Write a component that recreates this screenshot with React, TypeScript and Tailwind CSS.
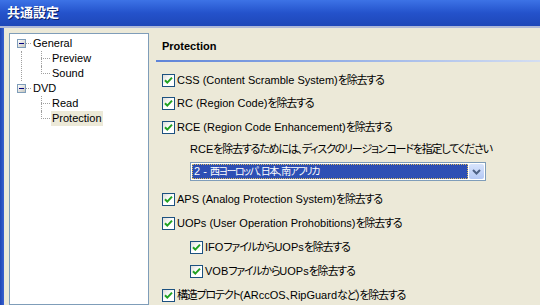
import React from "react";

const FONT = "font-['Liberation_Sans','Noto_Sans_CJK_JP',sans-serif] [font-feature-settings:'palt']";

// Japanese runs are set tighter so they keep the narrow look of the old UI font
const Jp = ({ text, tight = false }: { text: string; tight?: boolean }) => {
  const parts = text.split(/([^\x00-\x7f]+)/);
  return (
    <>
      {parts.map((p, i) =>
        /[^\x00-\x7f]/.test(p) ? (
          <span key={i} className={tight ? "text-[10px] tracking-[-1.5px]" : "tracking-[-1.2px]"}>
            {p}
          </span>
        ) : (
          <span key={i} className="whitespace-pre">
            {p}
          </span>
        )
      )}
    </>
  );
};

const CheckBox = () => (
  <span className="flex h-[13px] w-[13px] shrink-0 items-center justify-center border border-[#1c5180] bg-gradient-to-br from-[#dcdcd7] via-white to-white">
    <svg width="9" height="9" viewBox="0 0 9 9">
      <path d="M1 4.2 L3.3 6.6 L8 1.6" fill="none" stroke="#21a121" strokeWidth="2" />
    </svg>
  </span>
);

const Option = ({ label, indent = false }: { label: string; indent?: boolean }) => (
  <div className={`flex h-[13px] items-center gap-[2px] ${indent ? "pl-[28px]" : ""}`}>
    <CheckBox />
    <span className="whitespace-nowrap text-[11px] leading-none text-black">
      <Jp text={label} />
    </span>
  </div>
);

const Expander = () => (
  <span className="relative z-10 flex h-[9px] w-[9px] items-center justify-center border border-[#7f9db9] bg-gradient-to-br from-white to-[#c6c6be]">
    <span className="h-px w-[5px] bg-[#00007f]" />
  </span>
);

// dotted elbow connecting a child to its parent branch
const Elbow = ({ last }: { last?: boolean }) => (
  <span className="relative ml-[31px] h-[15px] w-[9px] shrink-0">
    <span
      className={`absolute left-0 top-0 w-0 border-l border-dotted border-[#a0a0a0] ${last ? "h-[8px]" : "h-[15px]"}`}
    />
    <span className="absolute left-0 top-[7px] h-0 w-[9px] border-t border-dotted border-[#a0a0a0]" />
  </span>
);

const TreeRoot = ({ label }: { label: string }) => (
  <div className="flex h-[15px] items-center pl-[7px]">
    <Expander />
    <span className="h-0 w-[5px] border-t border-dotted border-[#a0a0a0]" />
    <span className="pl-[2px] text-[11px] leading-none text-black">{label}</span>
  </div>
);

const TreeChild = ({ label, last, selected }: { label: string; last?: boolean; selected?: boolean }) => (
  <div className="flex h-[15px] items-center">
    <Elbow last={last} />
    <span
      className={`ml-[1px] px-[1px] py-[2px] text-[11px] leading-none text-black ${selected ? "bg-[#ece9d8]" : ""}`}
    >
      {label}
    </span>
  </div>
);

export default function App() {
  return (
    <div className={`flex h-[305px] w-[540px] flex-col overflow-hidden bg-[#ece9d8] ${FONT}`}>
      <div className="flex h-[26px] shrink-0 items-center bg-gradient-to-b from-[#3d73e6] via-[#2452cb] to-[#1e47b8] pl-[7px]">
        <span className="text-[13px] font-bold text-white [text-shadow:1px_1px_0_#0a1e6a]">共通設定</span>
      </div>
      <div className="h-[2px] shrink-0 bg-[#aeb8d8]" />
      <div className="flex min-h-0 flex-1">
        <div className="w-[4px] shrink-0 bg-gradient-to-r from-[#1d45b5] to-[#3a62d0]" />
        <div className="flex min-h-0 flex-1 pl-[5px] pt-[5px]">
          <div className="flex w-[140px] shrink-0 flex-col border border-[#7f9db9] bg-white pt-[2px]">
            <TreeRoot label="General" />
            <div className="relative">
              <span className="absolute left-[11px] top-0 h-[30px] border-l border-dotted border-[#a0a0a0]" />
              <TreeChild label="Preview" />
              <TreeChild label="Sound" last />
            </div>
            <TreeRoot label="DVD" />
            <TreeChild label="Read" />
            <TreeChild label="Protection" last selected />
          </div>
          <div className="flex min-w-0 flex-1 flex-col pl-[7px] pt-[8px]">
            <div className="pl-[6px] text-[11px] font-bold leading-none text-black">Protection</div>
            <div className="mt-[8px] h-[2px] bg-gradient-to-r from-[#5f84d8] to-[#d4def2]" />
            <div className="flex flex-col pl-[6px] pt-[12px]">
              <Option label="CSS (Content Scramble System)を除去する" />
              <div className="mt-[10px]">
                <Option label="RC (Region Code)を除去する" />
              </div>
              <div className="mt-[11px]">
                <Option label="RCE (Region Code Enhancement)を除去する" />
              </div>
              <div className="mt-[10px] whitespace-nowrap pl-[28px] text-[11px] leading-none text-black">
                <Jp text="RCEを除去するためには、ディスクのリージョンコードを指定してください" />
              </div>
              <div className="ml-[28px] mt-[7px] flex h-[19px] w-[296px] items-center border border-[#7f9db9] bg-white p-[1px]">
                <div className="flex h-full flex-1 items-center whitespace-nowrap border border-dotted border-[#e0c060] bg-[#2d4fb4] pl-[1px] text-[11px] leading-none text-white">
                  <Jp text="2 - 西ヨーロッパ、日本、南アフリカ" tight />
                </div>
                <div className="ml-[1px] flex h-full w-[15px] items-center justify-center rounded-[2px] bg-gradient-to-b from-[#d8e4fc] to-[#b4c8f4]">
                  <svg width="9" height="6" viewBox="0 0 9 6">
                    <path d="M1 1 L4.5 4.5 L8 1" fill="none" stroke="#4d6185" strokeWidth="2" />
                  </svg>
                </div>
              </div>
              <div className="mt-[12px] flex flex-col gap-[11px]">
                <Option label="APS (Analog Protection System)を除去する" />
                <Option label="UOPs (User Operation Prohobitions)を除去する" />
                <Option label="IFOファイルからUOPsを除去する" indent />
                <Option label="VOBファイルからUOPsを除去する" indent />
                <Option label="構造プロテクト(ARccOS、RipGuardなど)を除去する" />
              </div>
            </div>
          </div>
        </div>
      </div>
    </div>
  );
}
